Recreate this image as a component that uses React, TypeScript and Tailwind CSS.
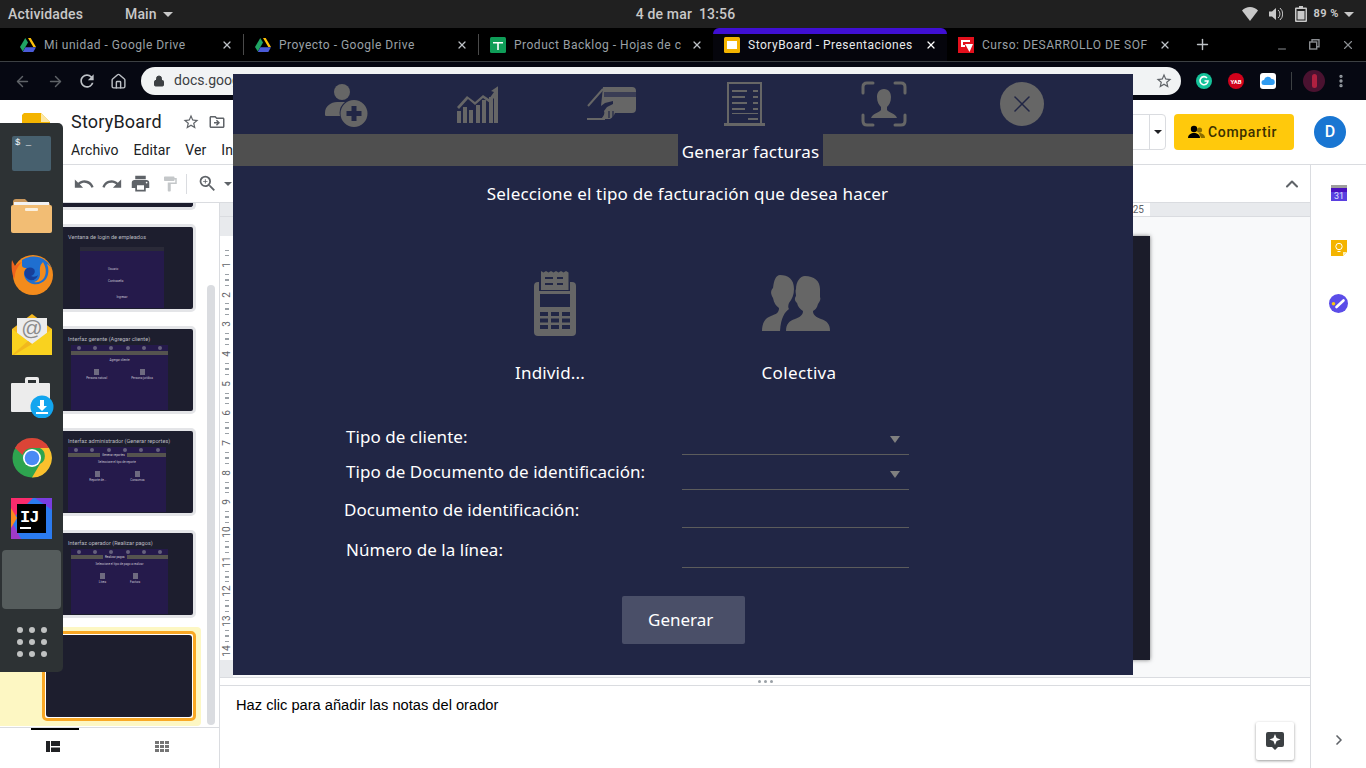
import React from "react";
import { ArrowLeft, ArrowRight, Home, Lock, X, Plus, Minus, ChevronUp, ChevronRight, MoreVertical } from "lucide-react";
import { MdUndo, MdRedo, MdPrint, MdFormatPaint, MdZoomIn, MdStarBorder, MdOutlineDriveFileMove, MdRefresh } from "react-icons/md";

const G = "#666666";
const BG = "#212645";

const Drive = () => (
  <svg width="16" height="14" viewBox="0 0 16 14"><polygon points="5.3,0 10.7,0 16,9 13.3,9 8,0" fill="#ffc107" /><polygon points="5.3,0 8,4.5 2.8,13.5 0,9" fill="#1fa463" /><polygon points="2.8,14 5.4,9.3 16,9.3 13.3,14" fill="#4a5bd8" /></svg>
);
const Sheets = () => (
  <svg width="16" height="16" viewBox="0 0 16 16"><rect width="16" height="16" rx="1.5" fill="#0f9d58" /><path d="M3 5h10v1.6H8.8V13H7.2V6.6H3z" fill="#fff" /></svg>
);
const Slides = () => (
  <svg width="16" height="16" viewBox="0 0 16 16"><rect width="16" height="16" rx="1.5" fill="#f4b400" /><rect x="3" y="4" width="10" height="8" fill="#fff" /></svg>
);
const Curso = () => (
  <svg width="16" height="16" viewBox="0 0 16 16"><rect width="16" height="16" fill="#e3101c" /><path d="M3 3h9v2H5v3h2v2H3z" fill="#fff" /><path d="M7 7h8l-3.5 8z" fill="#fff" /></svg>
);

function Tab({ icon, title, w, pl, active }: { icon: React.ReactNode; title: string; w: string; pl: string; active?: boolean }) {
  return (
    <div className={`relative flex h-full shrink-0 items-center pr-[10px] ${pl} ${w} ${active ? "rounded-t-lg bg-[#05050c]" : ""}`}>
      {active && <span className="absolute inset-x-0 top-0 h-[6px] rounded-t-lg bg-[#3f0fd3]" />}
      <span className="mr-[8px] flex w-[16px] shrink-0 justify-center">{icon}</span>
      <span className={`flex-1 whitespace-nowrap text-[12px] tracking-[0.5px] ${active ? "text-[#e8eaed]" : "text-[#9aa0a6]"}`}>{title}</span>
      <X size={12} strokeWidth={2.5} className={`shrink-0 ${active ? "text-white" : "text-[#bdc1c6]"}`} />
    </div>
  );
}

function Thumb({ title, winX, winW, winTop, winH, children }: { title: string; winX: string; winW: string; winTop: string; winH: string; children?: React.ReactNode }) {
  return (
    <div className="ml-[42px] h-[88px] w-[154px] rounded-[5px] border-[3px] border-[#e4e5e8] bg-[#1d1e2e]">
      <div className="pl-[23px] pt-[6px] text-[5.6px] leading-[8px] text-[#b9bac0]">{title}</div>
      <div className={`${winX} ${winW} ${winTop} ${winH} bg-[#251a4b]`}>
        {children}
      </div>
    </div>
  );
}

function MiniHeader({ tab }: { tab?: string }) {
  return (
    <div>
      <div className="flex h-[6px] items-center justify-around">
        {[0, 1, 2, 3, 4, 5].map((i) => <span key={i} className="h-[4px] w-[4px] rounded-full bg-[#66617d]" />)}
      </div>
      <div className="flex h-[4px] bg-[#55534f]">
        {tab && <span className="ml-[33%] bg-[#251a4b] px-[2px] text-[3px] leading-[4px] text-[#d0d0d0]">{tab}</span>}
      </div>
    </div>
  );
}

function Mini({ a, b, top }: { a: string; b: string; top: string }) {
  return (
    <div className={`${top} flex justify-center gap-[24px] text-[3px] text-[#c5c3d0]`}>
      <div className="flex flex-col items-center gap-[1px]"><span className="h-[6px] w-[5px] bg-[#6e6a80]" />{a}</div>
      <div className="flex flex-col items-center gap-[1px]"><span className="h-[6px] w-[5px] bg-[#6e6a80]" />{b}</div>
    </div>
  );
}

function Filmstrip() {
  return (
    <div className="flex w-[220px] shrink-0 flex-col border-r border-[#dadce0] bg-white">
      <div className="relative flex-1 overflow-hidden">
        <div className="ml-[42px] h-[7px] w-[154px] rounded-b-[5px] border-x-[3px] border-b-[3px] border-[#e4e5e8] bg-[#1d1e2e]" />
        <div className="mt-[14px] flex flex-col gap-[14px]">
          <Thumb title="Ventana de login de empleados" winX="ml-[35px]" winW="w-[84px]" winTop="mt-[6px]" winH="h-[61px]">
            <div className="h-[4px] bg-[#2a2a38]" />
            <div className="mt-[16px] pl-[28px] text-[3px] text-[#c5c3d0]">Usuario</div>
            <div className="mt-[7px] pl-[28px] text-[3px] text-[#c5c3d0]">Contraseña</div>
            <div className="mt-[12px] text-center text-[3px] text-[#c5c3d0]">Ingresar</div>
          </Thumb>
          <Thumb title="Interfaz gerente (Agregar cliente)" winX="ml-[26px]" winW="w-[97px]" winTop="mt-[2px]" winH="h-[65px]">
            <MiniHeader />
            <div className="mt-[3px] text-center text-[3px] text-[#c5c3d0]">Agregar cliente</div>
            <Mini a="Persona natural" b="Persona jurídica" top="mt-[6px]" />
          </Thumb>
          <Thumb title="Interfaz administrador (Generar reportes)" winX="ml-[23px]" winW="w-[98px]" winTop="mt-[2px]" winH="h-[65px]">
            <MiniHeader tab="Generar reportes" />
            <div className="mt-[3px] text-center text-[3px] text-[#c5c3d0]">Seleccione el tipo de reporte</div>
            <Mini a="Reporte de..." b="Consumos" top="mt-[6px]" />
          </Thumb>
          <Thumb title="Interfaz operador (Realizar pagos)" winX="ml-[26px]" winW="w-[97px]" winTop="mt-[2px]" winH="h-[65px]">
            <MiniHeader tab="Realizar pagos" />
            <div className="mt-[3px] text-center text-[3px] text-[#c5c3d0]">Seleccione el tipo de pago a realizar</div>
            <Mini a="Línea" b="Factura" top="mt-[6px]" />
          </Thumb>
        </div>
        <div className="mt-[9px] h-[99px] w-[201px] rounded-r-[4px] bg-[#fdf7c3] pt-[4px]">
          <div className="ml-[42px] h-[90px] w-[154px] rounded-[5px] border-[3px] border-[#f9a825] bg-white p-[1px]">
            <div className="h-full rounded-[3px] bg-[#1d1e2e]" />
          </div>
        </div>
        <div className="absolute left-[207px] top-[82px] h-[440px] w-[8px] rounded-full bg-[#dadce0]" />
      </div>
      <div className="relative flex h-[41px] items-center border-t border-[#dadce0]">
        <span className="absolute left-[31px] top-0 h-[2px] w-[48px] bg-black" />
        <svg className="absolute left-[46px] top-[13px]" width="14" height="11" viewBox="0 0 14 11" fill="#202124"><rect width="4" height="11" /><rect x="5" width="9" height="5" /><rect x="5" y="6.5" width="9" height="4.5" /></svg>
        <svg className="absolute left-[155px] top-[13px]" width="14" height="11" viewBox="0 0 14 11" fill="#757575"><rect width="4" height="3" /><rect x="5" width="4" height="3" /><rect x="10" width="4" height="3" /><rect y="4" width="4" height="3" /><rect x="5" y="4" width="4" height="3" /><rect x="10" y="4" width="4" height="3" /><rect y="8" width="4" height="3" /><rect x="5" y="8" width="4" height="3" /><rect x="10" y="8" width="4" height="3" /></svg>
      </div>
    </div>
  );
}

function VRuler() {
  const nums = [1, 2, 3, 4, 5, 6, 7, 8, 9, 10, 11, 12, 13, 14];
  return (
    <div className="flex w-[13px] shrink-0 flex-col items-center bg-white">
      <div className="h-[19px] w-full bg-[#e8eaed]" />
      <div className="flex h-[424px] w-full flex-col items-center overflow-hidden pt-[14px]">
        {nums.map((n) => (
          <div key={n} className="flex h-[29.7px] shrink-0 flex-col items-center justify-between">
            <span className="h-px w-[4px] bg-[#9aa0a6]" />
            <span className="h-px w-[4px] bg-[#9aa0a6]" />
            <span className="-rotate-90 text-[10px] leading-[10px] text-[#5f6368]">{n}</span>
            <span className="h-px w-[4px] bg-[#9aa0a6]" />
            <span className="h-px w-[4px] bg-[#9aa0a6]" />
          </div>
        ))}
      </div>
      <div className="w-full flex-1 bg-[#e8eaed]" />
    </div>
  );
}

function Docs() {
  return (
    <div className="flex min-h-0 flex-1 flex-col bg-white font-['Roboto',sans-serif]">
      <div className="flex h-[65px] shrink-0 border-b border-[#dadce0]">
        <svg className="ml-[22px] mt-[13px]" width="28" height="38" viewBox="0 0 28 38"><path d="M2 0h17l9 9v29H0V2z" fill="#f4b400" /><path d="M19 0l9 9h-9z" fill="#fce8a6" /></svg>
        <div className="ml-[21px] flex flex-col">
          <div className="mt-[10px] flex items-center text-[18px] leading-6 tracking-[0.2px] text-[#202124]">
            StoryBoard
            <MdStarBorder size={18} className="ml-[20px] text-[#5f6368]" />
            <MdOutlineDriveFileMove size={18} className="ml-[8px] text-[#5f6368]" />
          </div>
          <div className="mt-[6px] flex gap-[15px] text-[14px] leading-5 tracking-[0.1px] text-[#202124]">
            <span>Archivo</span><span>Editar</span><span>Ver</span><span>Insertar</span>
          </div>
        </div>
        <div className="ml-auto mr-[20px] mt-[14px] flex h-[36px] items-center">
          <div className="mr-[8px] flex h-[36px] w-[40px] justify-end rounded-r border border-[#dadce0]">
            <div className="flex w-[16px] items-center justify-center border-l border-[#dadce0]">
              <span className="border-x-[4px] border-t-[4px] border-x-transparent border-t-[#202124]" />
            </div>
          </div>
          <div className="flex h-[36px] w-[120px] items-center gap-[3px] rounded bg-[#ffc90c] pl-[14px] text-[14px] font-medium tracking-[0.65px] text-[#3c3000]">
            <svg width="17" height="14" viewBox="0 0 17 14"><circle cx="6" cy="4" r="3.2" fill="#000" /><path d="M0 13c0-3.5 3-5 6-5s6 1.5 6 5z" fill="#000" /><circle cx="11.5" cy="5" r="2.6" fill="#8a6d00" /><path d="M11 8c3 0 6 1.5 6 5h-4z" fill="#8a6d00" /></svg>
            Compartir
          </div>
          <div className="ml-[20px] flex h-[32px] w-[32px] items-center justify-center rounded-full bg-[#1976d2] text-[16px] font-medium text-white">D</div>
        </div>
      </div>
      <div className="flex min-h-0 flex-1">
        <div className="flex min-w-0 flex-1 flex-col">
          <div className="flex h-[38px] shrink-0 items-center border-b border-[#dadce0] text-[#5f6368]">
            <MdUndo size={22} className="ml-[73px]" />
            <MdRedo size={22} className="ml-[6px]" />
            <MdPrint size={21} className="ml-[7px]" />
            <MdFormatPaint size={18} className="ml-[10px] text-[#c4c7c9]" />
            <span className="ml-[7px] h-[20px] w-px bg-[#dadce0]" />
            <MdZoomIn size={21} className="ml-[10px]" />
            <span className="ml-[6px] border-x-[4px] border-t-[4px] border-x-transparent border-t-[#5f6368]" />
            <ChevronUp size={20} className="ml-auto mr-[8px]" strokeWidth={2.5} />
          </div>
          <div className="flex min-h-0 flex-1">
            <Filmstrip />
            <div className="flex min-w-0 flex-1 flex-col">
              <div className="flex h-[14px] shrink-0 border-b border-[#dadce0] bg-[#e8eaed]">
                <div className="ml-[13px] flex w-[917px] justify-end bg-white pr-[6px] text-[10px] leading-[13px] text-[#5f6368]">25</div>
              </div>
              <div className="flex min-h-0 flex-1">
                <VRuler />
                <div className="min-w-0 flex-1 bg-[#f8f9fa] pt-[19px]">
                  <div className="ml-[auto] mr-[160px] h-[424px] w-[600px] bg-[#1b1c2a] shadow-[0_0_4px_rgba(0,0,0,0.5)]" />
                </div>
              </div>
              <div className="flex h-[9px] shrink-0 items-center justify-center gap-[3px] border-y border-[#dadce0] bg-white">
                <span className="h-[3px] w-[3px] rounded-full bg-[#9aa0a6]" /><span className="h-[3px] w-[3px] rounded-full bg-[#9aa0a6]" /><span className="h-[3px] w-[3px] rounded-full bg-[#9aa0a6]" />
              </div>
              <div className="flex h-[82px] shrink-0 flex-col bg-white pl-[16px] pr-[16px] pt-[10px] font-['Liberation_Sans',sans-serif] text-[14.67px] leading-[18px] text-black">
                Haz clic para añadir las notas del orador
                <div className="ml-auto mt-[8px] flex h-[38px] w-[38px] items-center justify-center rounded-[2px] bg-white shadow-[0_1px_3px_rgba(0,0,0,0.4)]">
                  <svg width="18" height="18" viewBox="0 0 18 18" fill="#3c4043"><path fillRule="evenodd" d="M2 0h14a2 2 0 0 1 2 2v11a2 2 0 0 1-2 2h-4l-3 3-3-3H2a2 2 0 0 1-2-2V2a2 2 0 0 1 2-2zm7 2l-1.6 4-3.9 1.5 3.9 1.5L9 13l1.6-4 3.9-1.5-3.9-1.5z" /></svg>
                </div>
              </div>
            </div>
          </div>
        </div>
        <div className="flex w-[56px] shrink-0 flex-col items-center border-l border-[#dadce0] bg-white">
          <svg className="mt-[20px]" width="16" height="16" viewBox="0 0 16 16"><rect width="16" height="3" fill="#9e9e9e" /><rect y="3" width="16" height="13" fill="#5a3fe0" /><rect y="3" width="16" height="4" fill="#4a10c0" /><text x="8" y="13.5" fontSize="9" textAnchor="middle" fill="#dfe0ff" fontFamily="Roboto">31</text></svg>
          <svg className="mt-[39px]" width="16" height="16" viewBox="0 0 16 16"><path d="M0 0h16v12l-4 4H0z" fill="#f4b400" /><path d="M12 16v-4h4z" fill="#fdf0b5" /><circle cx="8" cy="6.5" r="3.2" fill="none" stroke="#fff" strokeWidth="1" /><path d="M6.5 11.5h3" stroke="#fff" strokeWidth="1" /></svg>
          <svg className="mt-[38px]" width="19" height="19" viewBox="0 0 19 19"><circle cx="9.5" cy="9.5" r="9.5" fill="#5b4de8" /><circle cx="4.5" cy="9.7" r="1.8" fill="#f9c80e" /><path d="M7.5 13l7-6.5" stroke="#fff" strokeWidth="2.6" strokeLinecap="round" /></svg>
          <ChevronRight size={16} className="mt-auto mb-[20px] text-[#5f6368]" strokeWidth={2.5} />
        </div>
      </div>
    </div>
  );
}

function DockIcon({ children, cls }: { children: React.ReactNode; cls: string }) {
  return <div className={`flex justify-center ${cls}`}>{children}</div>;
}

function Dock() {
  return (
    <div className="absolute left-0 top-[123px] flex h-[549px] w-[63px] flex-col rounded-r-[5px] bg-[#2d3234]">
      <DockIcon cls="mt-[13px]">
        <div className="h-[35px] w-[39px] rounded-[2px] bg-[#47606e] pl-[3px] font-['Liberation_Mono',monospace] text-[9px] leading-[14px] text-white">$ _</div>
      </DockIcon>
      <DockIcon cls="mt-[26px]">
        <svg width="41" height="36" viewBox="0 0 41 36"><path d="M2 5q0-3 3-3h9l3 3h19q3 0 3 3v5H2z" fill="#c8975c" /><rect x="3" y="5" width="35" height="4" fill="#f2f2f2" /><path d="M0 10q0-2 2-2h37q2 0 2 2v24q0 2-2 2H2q-2 0-2-2z" fill="#f2bd74" /><rect x="14" y="11" width="13" height="3" rx="1" fill="#fbf0de" /></svg>
      </DockIcon>
      <DockIcon cls="mt-[21px]">
        <svg width="44" height="41" viewBox="0 0 44 41"><circle cx="23" cy="21" r="20" fill="#f38b1c" /><path d="M12 6A20 20 0 0 1 42 15c-2-3-3-4-5-5 2 5 2 10-1 15-3 4-8 6-13 5-5-1-9-6-9-10 0-3 2-5 3-6-2 0-4 0-5-2z" fill="#1f6fd0" /><path d="M33 8c3 5 4 11 1 16-3 4-7 5-10 4 4-1 6-4 6-8 0-5-1-8 3-12z" fill="#f38b1c" /><path d="M2 6l3 6c2-2 4-3 7-4-3 3-7 8-7 14l-1 3C2 20 1 12 2 6z" fill="#f0641d" /><path d="M15 16c3-3 6-3 9-1 2 3 0 6-3 7 2 1 5 1 7-1-1 4-5 6-8 5-4-1-7-6-5-10z" fill="#173f9a" /></svg>
      </DockIcon>
      <DockIcon cls="mt-[19px]">
        <svg width="40" height="41" viewBox="0 0 40 41"><path d="M0 15L20 0l20 15v26H0z" fill="#f5b921" /><rect x="5" y="4" width="30" height="27" fill="#ececec" /><text x="20" y="21" fontSize="21" textAnchor="middle" fill="#8c8c8c" fontFamily="Liberation Sans">@</text><path d="M0 15l20 15 20-15v26H0z" fill="#f9d21f" /><path d="M0 41l16-14 4 3-18 11z" fill="#f1b81d" /></svg>
      </DockIcon>
      <DockIcon cls="mt-[22px]">
        <svg width="46" height="41" viewBox="0 0 46 41"><path d="M16 6V2q0-2 2-2h10q2 0 2 2v4h-3V3h-8v3z" fill="#ececec" /><rect x="2" y="6" width="39" height="29" rx="1" fill="#ececec" /><circle cx="33" cy="30" r="11.5" fill="#12a5ef" /><path d="M31 23h4v6h3l-5 5-5-5h3zM27 35h12v2H27z" fill="#fff" /></svg>
      </DockIcon>
      <DockIcon cls="mt-[20px]">
        <svg width="40" height="40" viewBox="0 0 40 40"><circle cx="20" cy="20" r="19.5" fill="#2ea44f" /><path d="M3 10A19.5 19.5 0 0 1 37 10H20a10 10 0 0 0-9.5 7z" fill="#db4437" /><path d="M37 10a19.5 19.5 0 0 1-17 29.5L28 26a9 9 0 0 0 0-16z" fill="#fbc02d" /><circle cx="20" cy="20" r="9" fill="#fff" /><circle cx="20" cy="20" r="7.3" fill="#4a8af4" /></svg>
      </DockIcon>
      <DockIcon cls="mt-[20px]">
        <svg width="41" height="41" viewBox="0 0 41 41"><rect width="41" height="41" fill="#2b7bf0" /><path d="M0 0h22L0 22z" fill="#fb2b6c" /><path d="M0 41V22l10 19z" fill="#a03ac8" /><path d="M0 10l6 10L0 30z" fill="#fb8a1e" /><path d="M24 0h17v12z" fill="#7a3de0" /><rect x="6" y="6" width="29" height="29" fill="#000" /><rect x="9" y="29" width="11" height="2" fill="#fff" /><text x="9" y="24" fontSize="17" fontWeight="700" fill="#fff" fontFamily="Liberation Mono" letterSpacing="-1">IJ</text></svg>
      </DockIcon>
      <div className="mx-auto mt-[11px] h-[59px] w-[59px] rounded-[4px] bg-[#555c5c]" />
      <div className="mt-[18px] grid grid-cols-3 justify-items-center gap-[6px] self-center">
        {[0, 1, 2, 3, 4, 5, 6, 7, 8].map((i) => <span key={i} className="h-[6px] w-[6px] rounded-full bg-[#c0c2c2]" />)}
      </div>
    </div>
  );
}

function Modal() {
  return (
    <div className="absolute left-[233px] top-[74px] flex h-[601px] w-[900px] flex-col bg-[#212645] font-['Noto_Sans',sans-serif] text-white">
      <div className="flex h-[60px] shrink-0 items-center">
        <svg className="ml-[92px] mt-[2px]" width="43" height="44" viewBox="0 0 43 44" fill={G}><circle cx="17" cy="9" r="8" /><path d="M0 30c0-7 6-11 12-11h8a14 14 0 0 0-5 14H2a2 2 0 0 1-2-3z" /><path fillRule="evenodd" d="M29 17a13.5 13.5 0 1 1 0 27 13.5 13.5 0 0 1 0-27zm-2.5 6v5h-5v5h5v5h5v-5h5v-5h-5v-5z" /></svg>
        <svg className="ml-[89px]" width="41" height="38" viewBox="0 0 41 38" fill={G}><rect x="0" y="26" width="4" height="12" /><rect x="6" y="22" width="4" height="16" /><rect x="12" y="25" width="4" height="13" /><rect x="19" y="20" width="4" height="18" /><rect x="25" y="15" width="4" height="23" /><rect x="32" y="12" width="4" height="26" /><rect x="37" y="8" width="4" height="30" /><path d="M0 22l10-11 8 6 8-7 6 4 5-7-3-1 9-6v11l-3-2-7 9-7-5-8 7-7-6-9 10z" /></svg>
        <svg className="ml-[89px]" width="49" height="34" viewBox="0 0 49 34"><path d="M16 0h29q4 0 4 4v18q0 4-4 4H28c-1 3-3 5-5 6H14c3-3 4-6 3-8l3-4 6-3v-3l-8 2-4 3z" fill={G} /><rect x="17" y="5" width="32" height="5" fill="#3a3d55" /><path d="M1 19L16 2M0 32h18" stroke={G} strokeWidth="2" /><path d="M22 24v7M26 24v7" stroke={BG} strokeWidth="1.2" /></svg>
        <svg className="ml-[88px]" width="41" height="44" viewBox="0 0 41 44" fill={G}><path fillRule="evenodd" d="M3 0h35v41h3v3H0v-3h3zm2 2v39h31V2z" /><rect x="8" y="8" width="15" height="2" /><rect x="29" y="8" width="5" height="2" /><rect x="8" y="14" width="13" height="2" /><rect x="29" y="14" width="5" height="2" /><rect x="8" y="20" width="15" height="2" /><rect x="29" y="20" width="5" height="2" /><rect x="8" y="26" width="13" height="2" /><rect x="29" y="26" width="5" height="2" /><rect x="8" y="31" width="26" height="1" /><rect x="24" y="36" width="10" height="2" /></svg>
        <svg className="ml-[96px]" width="46" height="46" viewBox="0 0 46 46" fill="none"><path d="M2 12V6q0-4 4-4h6M34 2h6q4 0 4 4v6M44 34v6q0 4-4 4h-6M12 44H6q-4 0-4-4v-6" stroke={G} strokeWidth="3" strokeLinecap="round" /><path d="M23 8c-5 0-7 4-7 8 0 5 2 8 4 10v3c-2 3-8 3-10 8h26c-2-5-8-5-10-8v-3c2-2 4-5 4-10 0-4-2-8-7-8z" fill={G} /></svg>
        <div className="ml-[93px] flex h-[44px] w-[44px] items-center justify-center rounded-full bg-[#666666]">
          <X size={28} strokeWidth={1.3} className="text-[#212645]" />
        </div>
      </div>
      <div className="flex h-[32px] shrink-0">
        <div className="w-[445px] bg-[#4f4f4f]" />
        <div className="w-[145px] pt-[6px] text-center text-[17px] leading-[24px] tracking-[0.2px]">Generar facturas</div>
        <div className="flex-1 bg-[#4f4f4f]" />
      </div>
      <div className="mt-[17px] pl-[9px] text-center text-[17px] leading-[22px] tracking-[0.18px]">Seleccione el tipo de facturación que desea hacer</div>
      <div className="mt-[65px] flex">
        <div className="ml-[272px] flex w-[100px] flex-col items-center">
          <svg width="42" height="66" viewBox="0 0 42 66">
            <rect x="0" y="12" width="42" height="54" rx="4" fill={G} />
            <rect x="6" y="24" width="30" height="13" fill={BG} />
            <path d="M6 42h8v4H6zM17 42h8v4h-8zM28 42h8v4h-8zM6 48.500h8v4H6zM17 48.500h8v4h-8zM28 48.500h8v4h-8zM6 55h8v4H6zM17 55h8v4h-8zM28 55h8v4h-8z" fill={BG} />
            <path d="M5 2l2.600 1.500L10 2l2.600 1.500L15 2l2.600 1.500L20 2l2.600 1.500L25 2l2.600 1.500L30 2l2.600 1.500L36 2v19H5z" fill={BG} />
            <path d="M7 1l2.500 1.500L12 1l2.500 1.500L17 1l2.500 1.500L22 1l2.500 1.500L27 1l2.500 1.500L32 1l2.500 1.500V20H7z" fill={G} />
            <path d="M11 7h8v2h-8zM23 7h6v2h-6zM11 13h8v2h-8zM23 13h6v2h-6z" fill={BG} />
          </svg>
          <div className="mt-[25px] -translate-x-[5px] text-[17px] leading-[24px] tracking-[0.15px]">Individ...</div>
        </div>
        <div className="ml-[139px] flex w-[110px] flex-col items-center pt-[5px]">
          <svg className="mr-[6px]" width="68" height="56" viewBox="0 0 68 56" fill={G}><path d="M18 0c8 0 14 4 14 14 0 6-2 10-5 14-1 2-1 5 0 6-4 3-8 8-9 22H0c0-8 3-13 9-15 5-2 8-3 8-8-3-2-5-5-6-10-3-5-2-8 0-10C12 5 14 0 18 0z" /><path d="M43 1c9 0 15 5 15 13 0 3 0 5 0 8 1 2 0 4-2 7-1 4-3 6-5 7 0 4 3 6 8 8 6 2 9 5 9 12H24c0-7 3-10 9-12 5-2 8-4 8-8-3-2-5-4-6-8-2-2-3-4-1-7 0-3-1-5 0-7 0-7 4-13 9-13z" /></svg>
          <div className="mt-[30px] text-[17px] leading-[24px] tracking-[0.35px]">Colectiva</div>
        </div>
      </div>
      <div className="mt-[35px] flex h-[36px] items-start">
        <div className="ml-[113px] w-[336px] pt-[6px] text-[17px] leading-[22px] tracking-[0.05px]">Tipo de cliente:</div>
        <div className="flex h-[35px] w-[227px] items-center justify-end border-b border-[#5c5c5c] pr-[9px] pt-[4px]"><span className="border-x-[5px] border-t-[7px] border-x-transparent border-t-[#808080]" /></div>
      </div>
      <div className="flex h-[34px] items-start">
        <div className="ml-[113px] w-[336px] pt-[5px] text-[17px] leading-[22px] tracking-[0.05px]">Tipo de Documento de identificación:</div>
        <div className="flex h-[34px] w-[227px] items-center justify-end border-b border-[#5c5c5c] pr-[9px] pt-[4px]"><span className="border-x-[5px] border-t-[7px] border-x-transparent border-t-[#808080]" /></div>
      </div>
      <div className="flex h-[38px] items-start">
        <div className="ml-[111px] w-[338px] pt-[9px] text-[17px] leading-[22px] tracking-[0.05px]">Documento de identificación:</div>
        <div className="h-[38px] w-[227px] border-b border-[#5c5c5c]" />
      </div>
      <div className="flex h-[40px] items-start">
        <div className="ml-[113px] w-[336px] pt-[11px] text-[17px] leading-[22px] tracking-[0.05px]">Número de la línea:</div>
        <div className="h-[40px] w-[227px] border-b border-[#5c5c5c]" />
      </div>
      <div className="ml-[389px] mt-[28px] flex h-[48px] w-[123px] items-center rounded-[2px] bg-[#4a4f68] pl-[26px] text-[17px]">Generar</div>
    </div>
  );
}

export default function App() {
  return (
    <div className="relative flex h-[768px] w-[1366px] flex-col overflow-hidden bg-black font-['Roboto',sans-serif]">
      <div className="flex h-[28px] shrink-0 items-center bg-[#202020] text-[14px] font-medium tracking-[0.15px] text-[#c8c8c8]">
        <span className="ml-[8px]">Actividades</span>
        <span className="ml-[42px]">Main</span>
        <span className="ml-[6px] border-x-[5px] border-t-[5px] border-x-transparent border-t-[#c8c8c8]" />
        <span className="ml-[463px]">4 de mar</span>
        <span className="ml-[7px]">13:56</span>
        <div className="ml-auto flex items-center">
          <svg width="16" height="14" viewBox="0 0 16 14" fill="#c8c8c8"><path d="M0 3.500C2 1.500 5 0 8 0s6 1.500 8 3.500L8 14z" /></svg>
          <svg className="ml-[11px]" width="14" height="14" viewBox="0 0 14 14" fill="#c8c8c8"><path d="M0 4.500h3L7 1v12L3 9.500H0z" /><path d="M9 3a5 5 0 0 1 0 8M11 1a8 8 0 0 1 0 12" fill="none" stroke="#c8c8c8" strokeWidth="1" /></svg>
          <svg className="ml-[12px]" width="12" height="16" viewBox="0 0 12 16" fill="#c8c8c8"><path fillRule="evenodd" d="M4 0h4v1.500h3a1 1 0 0 1 1 1V15a1 1 0 0 1-1 1H1a1 1 0 0 1-1-1V2.500a1 1 0 0 1 1-1h3zM1.500 3v11.500h9V3z" /><rect x="2.500" y="5" width="7" height="8.500" /></svg>
          <span className="ml-[7px] text-[11px] font-bold tracking-[0.5px]">89 %</span>
          <span className="ml-[5px] mr-[12px] border-x-[5px] border-t-[5px] border-x-transparent border-t-[#c8c8c8]" />
        </div>
      </div>
      <div className="flex h-[34px] shrink-0 items-stretch border-b border-[#3c4043] bg-black">
        <Tab icon={<Drive />} title="Mi unidad - Google Drive" w="w-[243px]" pl="pl-[20px]" />
        <div className="my-[6px] w-px bg-[#4a4a4a]" />
        <Tab icon={<Drive />} title="Proyecto - Google Drive" w="w-[234px]" pl="pl-[11px]" />
        <div className="my-[6px] w-px bg-[#4a4a4a]" />
        <Tab icon={<Sheets />} title="Product Backlog - Hojas de c" w="w-[234px]" pl="pl-[11px]" />
        <Tab icon={<Slides />} title="StoryBoard - Presentaciones" w="w-[234px]" pl="pl-[11px]" active />
        <Tab icon={<Curso />} title="Curso: DESARROLLO DE SOF" w="w-[234px]" pl="pl-[11px]" />
        <Plus size={17} className="ml-[13px] self-center text-[#bdc1c6]" />
        <Minus size={12} className="ml-[65px] mt-[8px] self-center text-[#8a8d91]" />
        <svg className="ml-[21px] self-center" width="11" height="11" viewBox="0 0 11 11" fill="none" stroke="#8a8d91" strokeWidth="1.4"><rect x="0.7" y="3" width="7" height="7" /><path d="M3 3V0.7h7v7H8" /></svg>
        <X size={14} className="ml-[21px] self-center text-[#8a8d91]" />
      </div>
      <div className="flex h-[38px] shrink-0 items-center bg-[#060812] pl-[14px] text-[#5f6368]">
        <ArrowLeft size={17} />
        <ArrowRight size={17} className="ml-[16px]" />
        <MdRefresh size={20} className="ml-[13px] text-[#bdc1c6]" />
        <Home size={17} className="ml-[13px] text-[#bdc1c6]" />
        <div className="ml-[14px] flex h-[28px] w-[1040px] items-center rounded-full bg-[#f1f3f4] pl-[12px] text-[14px] text-[#3c4043]">
          <Lock size={12} fill="#3c4043" />
          <span className="ml-[9px] -translate-y-px">docs.google.com/presentation/d</span>
          <MdStarBorder size={18} className="ml-auto mr-[8px] text-[#5f6368]" />
        </div>
        <svg className="ml-[15px]" width="16" height="16" viewBox="0 0 16 16"><circle cx="8" cy="8" r="8" fill="#15c39a" /><path d="M11 5a4 4 0 1 0 1 3H8.5" fill="none" stroke="#fff" strokeWidth="1.6" /></svg>
        <div className="ml-[16px] flex h-[16px] w-[16px] items-center justify-center rounded-full bg-[#d0021b] text-[6px] font-bold text-white">YAB</div>
        <svg className="ml-[16px]" width="16" height="16" viewBox="0 0 16 16"><rect width="16" height="16" rx="3" fill="#fff" /><path d="M4 12a2.5 2.5 0 0 1 0-5 4 4 0 0 1 7.5-1A3 3 0 0 1 12 12z" fill="#2f9bf0" /></svg>
        <span className="ml-[15px] h-[18px] w-px bg-[#3c4043]" />
        <div className="ml-[11px] flex h-[22px] w-[22px] items-center justify-center rounded-full bg-[#4a1230]"><span className="h-[14px] w-[5px] rounded bg-[#b02040]" /></div>
        <MoreVertical size={16} className="ml-[8px] text-[#9aa0a6]" strokeWidth={3} />
      </div>
      <Docs />
      <Dock />
      <Modal />
    </div>
  );
}
